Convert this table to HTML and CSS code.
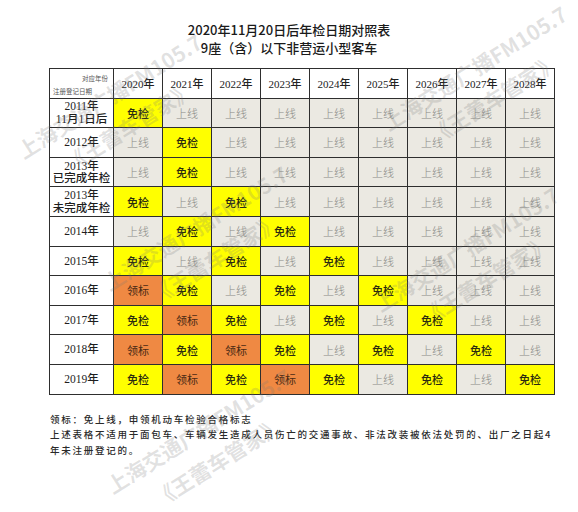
FILE: index.html
```html
<!DOCTYPE html>
<html lang="zh-CN">
<head>
    <meta charset="UTF-8">
    <meta name="viewport" content="width=device-width, initial-scale=1.0">
    <title>2020年11月20日后年检日期对照表</title>
    <link rel="stylesheet" href="styles.css">
</head>
<body>
    <div class="page">
        <div class="title">
            <div>2020年11月20日后年检日期对照表</div>
            <div>9座（含）以下非营运小型客车</div>
        </div>

        <div class="chart">
            <div class="corner">
                <span class="corner-top">对应年份</span>
                <span class="corner-bottom">注册登记日期</span>
            </div>
            <div class="head">2020年</div>
            <div class="head">2021年</div>
            <div class="head">2022年</div>
            <div class="head">2023年</div>
            <div class="head">2024年</div>
            <div class="head">2025年</div>
            <div class="head">2026年</div>
            <div class="head">2027年</div>
            <div class="head">2028年</div>

            <div class="side">2011年<br>11月1日后</div>
            <div class="cell free">免检</div>
            <div class="cell up">上线</div>
            <div class="cell up">上线</div>
            <div class="cell up">上线</div>
            <div class="cell up">上线</div>
            <div class="cell up">上线</div>
            <div class="cell up">上线</div>
            <div class="cell up">上线</div>
            <div class="cell up">上线</div>

            <div class="side">2012年</div>
            <div class="cell up">上线</div>
            <div class="cell free">免检</div>
            <div class="cell up">上线</div>
            <div class="cell up">上线</div>
            <div class="cell up">上线</div>
            <div class="cell up">上线</div>
            <div class="cell up">上线</div>
            <div class="cell up">上线</div>
            <div class="cell up">上线</div>

            <div class="side">2013年<br>已完成年检</div>
            <div class="cell up">上线</div>
            <div class="cell free">免检</div>
            <div class="cell up">上线</div>
            <div class="cell up">上线</div>
            <div class="cell up">上线</div>
            <div class="cell up">上线</div>
            <div class="cell up">上线</div>
            <div class="cell up">上线</div>
            <div class="cell up">上线</div>

            <div class="side">2013年<br>未完成年检</div>
            <div class="cell free">免检</div>
            <div class="cell up">上线</div>
            <div class="cell free">免检</div>
            <div class="cell up">上线</div>
            <div class="cell up">上线</div>
            <div class="cell up">上线</div>
            <div class="cell up">上线</div>
            <div class="cell up">上线</div>
            <div class="cell up">上线</div>

            <div class="side">2014年</div>
            <div class="cell up">上线</div>
            <div class="cell free">免检</div>
            <div class="cell up">上线</div>
            <div class="cell free">免检</div>
            <div class="cell up">上线</div>
            <div class="cell up">上线</div>
            <div class="cell up">上线</div>
            <div class="cell up">上线</div>
            <div class="cell up">上线</div>

            <div class="side">2015年</div>
            <div class="cell free">免检</div>
            <div class="cell up">上线</div>
            <div class="cell free">免检</div>
            <div class="cell up">上线</div>
            <div class="cell free">免检</div>
            <div class="cell up">上线</div>
            <div class="cell up">上线</div>
            <div class="cell up">上线</div>
            <div class="cell up">上线</div>

            <div class="side">2016年</div>
            <div class="cell tag">领标</div>
            <div class="cell free">免检</div>
            <div class="cell up">上线</div>
            <div class="cell free">免检</div>
            <div class="cell up">上线</div>
            <div class="cell free">免检</div>
            <div class="cell up">上线</div>
            <div class="cell up">上线</div>
            <div class="cell up">上线</div>

            <div class="side">2017年</div>
            <div class="cell free">免检</div>
            <div class="cell tag">领标</div>
            <div class="cell free">免检</div>
            <div class="cell up">上线</div>
            <div class="cell free">免检</div>
            <div class="cell up">上线</div>
            <div class="cell free">免检</div>
            <div class="cell up">上线</div>
            <div class="cell up">上线</div>

            <div class="side">2018年</div>
            <div class="cell tag">领标</div>
            <div class="cell free">免检</div>
            <div class="cell tag">领标</div>
            <div class="cell free">免检</div>
            <div class="cell up">上线</div>
            <div class="cell free">免检</div>
            <div class="cell up">上线</div>
            <div class="cell free">免检</div>
            <div class="cell up">上线</div>

            <div class="side">2019年</div>
            <div class="cell free">免检</div>
            <div class="cell tag">领标</div>
            <div class="cell free">免检</div>
            <div class="cell tag">领标</div>
            <div class="cell free">免检</div>
            <div class="cell up">上线</div>
            <div class="cell free">免检</div>
            <div class="cell up">上线</div>
            <div class="cell free">免检</div>
        </div>

        <div class="notes">
            <p>领标：免上线，申领机动车检验合格标志</p>
            <p>上述表格不适用于面包车、车辆发生造成人员伤亡的交通事故、非法改装被依法处罚的、出厂之日起4<br>年未注册登记的。</p>
        </div>

        <!-- watermarks -->
        <div class="mark mark-1">上海交通广播FM105.7<br>《王蕾车管家》</div>
        <div class="mark mark-2">上海交通广播FM105.7<br>《王蕾车管家》</div>
        <div class="mark mark-3">上海交通广播FM105.7<br>《王蕾车管家》</div>
        <div class="mark mark-4">上海交通广播FM105.7<br>《王蕾车管家》</div>
        <div class="mark mark-5">上海交通广播FM105.7<br>《王蕾车管家》</div>
    </div>
</body>
</html>
```

FILE: styles.css
```css
body {
    margin: 0;
    background: #fff;
    font-family: "Noto Sans CJK SC", "Noto Sans", sans-serif;
}
.page {
    position: relative;
    width: 578px;
    height: 512px;
    overflow: hidden;
}
.title {
    padding-top: 21px;
    text-align: center;
    font-size: 13px;
    line-height: 18px;
    font-weight: 500;
    color: #1a1a1a;
}
.chart {
    display: grid;
    grid-template-columns: 63px repeat(9, 48px);
    grid-auto-rows: 28.6px;
    gap: 1px;
    padding: 1px;
    width: max-content;
    margin: 11px 0 0 49px;
    background: #2e2e2e;
    font-family: "Liberation Serif", "Noto Sans CJK SC", serif;
    font-size: 11px;
}
.corner {
    position: relative;
    background: #fff;
    font-family: "Noto Sans CJK SC", sans-serif;
    font-size: 6.5px;
    color: #555;
}
.corner-top {
    position: absolute;
    top: 4px;
    right: 5px;
}
.corner-bottom {
    position: absolute;
    bottom: 2px;
    left: 3px;
}
.head, .side, .cell {
    display: flex;
    align-items: center;
    justify-content: center;
    text-align: center;
}
.head {
    background: #fff;
    color: #222;
    font-weight: 500;
}
.side {
    background: #fff;
    color: #1e1e1e;
    font-size: 11.5px;
    line-height: 12.5px;
    font-weight: 500;
}
.cell.up {
    background: #ebe9e2;
    color: #8a8a86;
    font-weight: 300;
}
.cell.free {
    background: #ffff00;
    color: #2a2a10;
    font-weight: 500;
}
.cell.tag {
    background: #ef8943;
    color: #4a2a14;
    font-weight: 400;
}
.notes {
    margin: 17px 0 0 50px;
    font-size: 9.5px;
    line-height: 15.5px;
    letter-spacing: 1.75px;
    color: #2a2a2a;
    font-weight: 500;
}
.notes p {
    margin: 0;
}
.mark {
    position: absolute;
    transform: translate(-50%, -50%) rotate(-32deg);
    white-space: nowrap;
    text-align: center;
    font-size: 21px;
    line-height: 36px;
    font-weight: 700;
    color: rgba(120, 120, 120, 0.22);
    pointer-events: none;
}
.mark-1 { left: 119px; top: 111px; }
.mark-2 { left: 484px; top: 83px; }
.mark-3 { left: 205px; top: 243px; }
.mark-4 { left: 476px; top: 264px; }
.mark-5 { left: 208px; top: 446px; }
```
